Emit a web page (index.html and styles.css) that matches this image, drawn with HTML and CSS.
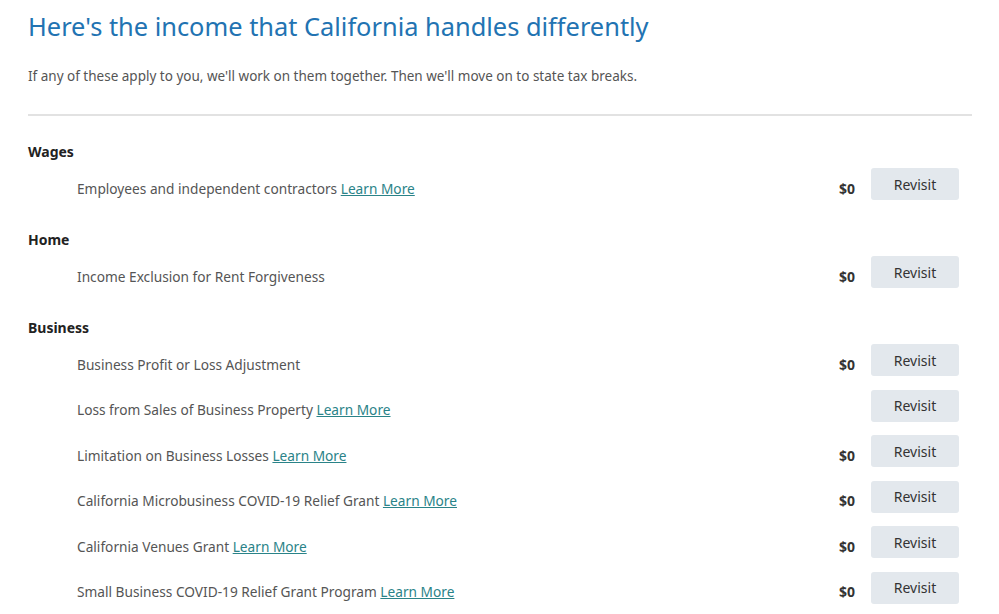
FILE: index.html
```html
<!DOCTYPE html>
<html lang="en">
<head>
    <meta charset="UTF-8">
    <meta name="viewport" content="width=device-width, initial-scale=1.0">
    <title>California income adjustments</title>
    <link rel="stylesheet" href="styles.css">
</head>
<body>
    <div class="page">
        <h1>Here's the income that California handles differently</h1>
        <p class="intro">If any of these apply to you, we'll work on them together. Then we'll move on to state tax breaks.</p>
        <hr class="divider">

        <!-- Wages -->
        <section class="group">
            <h2>Wages</h2>
            <div class="row">
                <span class="label">Employees and independent contractors <a href="#">Learn More</a></span>
                <span class="amount">$0</span>
                <button class="revisit">Revisit</button>
            </div>
        </section>

        <!-- Home -->
        <section class="group">
            <h2>Home</h2>
            <div class="row">
                <span class="label">Income Exclusion for Rent Forgiveness</span>
                <span class="amount">$0</span>
                <button class="revisit">Revisit</button>
            </div>
        </section>

        <!-- Business -->
        <section class="group">
            <h2>Business</h2>
            <div class="row">
                <span class="label">Business Profit or Loss Adjustment</span>
                <span class="amount">$0</span>
                <button class="revisit">Revisit</button>
            </div>
            <div class="row">
                <span class="label">Loss from Sales of Business Property <a href="#">Learn More</a></span>
                <span class="amount"></span>
                <button class="revisit">Revisit</button>
            </div>
            <div class="row">
                <span class="label">Limitation on Business Losses <a href="#">Learn More</a></span>
                <span class="amount">$0</span>
                <button class="revisit">Revisit</button>
            </div>
            <div class="row">
                <span class="label">California Microbusiness COVID-19 Relief Grant <a href="#">Learn More</a></span>
                <span class="amount">$0</span>
                <button class="revisit">Revisit</button>
            </div>
            <div class="row">
                <span class="label">California Venues Grant <a href="#">Learn More</a></span>
                <span class="amount">$0</span>
                <button class="revisit">Revisit</button>
            </div>
            <div class="row">
                <span class="label">Small Business COVID-19 Relief Grant Program <a href="#">Learn More</a></span>
                <span class="amount">$0</span>
                <button class="revisit">Revisit</button>
            </div>
        </section>
    </div>
</body>
</html>
```

FILE: styles.css
```css
body {
    margin: 0;
    font-family: "Noto Sans", Arial, sans-serif;
    background-color: #ffffff;
    color: #555555;
}
.page {
    width: 944px;
    padding: 8px 0 0 28px;
}
h1 {
    margin: 0;
    font-size: 25.4px;
    font-weight: 400;
    line-height: 36px;
    color: #2273b2;
}
.intro {
    margin: 22px 0 0;
    font-size: 13.5px;
    line-height: 20px;
    color: #555555;
}
.divider {
    margin: 28px 0 26px;
    border: none;
    border-top: 2px solid #e2e2e2;
}
.group {
    margin-bottom: 30px;
}
h2 {
    margin: 0 0 6px;
    font-size: 14px;
    font-weight: 700;
    line-height: 20px;
    color: #222222;
}
.row {
    display: flex;
    align-items: center;
    padding: 0 13px 0 49px;
    margin-bottom: 13.5px;
}
.label {
    flex: 1;
    padding-top: 8px;
    font-size: 13.7px;
    color: #555555;
}
.label a {
    color: #2a8388;
}
.amount {
    padding-top: 8px;
    font-size: 14px;
    font-weight: 700;
    color: #333333;
    margin-right: 16px;
}
.revisit {
    width: 88px;
    height: 32px;
    border: none;
    border-radius: 3px;
    background-color: #e3e8ed;
    color: #333333;
    font-family: inherit;
    font-size: 14px;
    cursor: pointer;
}
```
